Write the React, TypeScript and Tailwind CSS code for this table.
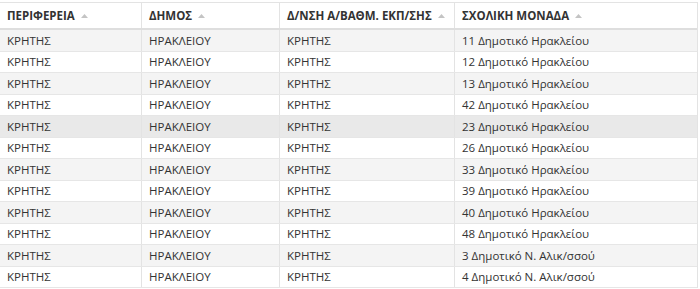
import React from "react";

const rows: string[] = [
  "11 Δημοτικό Ηρακλείου",
  "12 Δημοτικό Ηρακλείου",
  "13 Δημοτικό Ηρακλείου",
  "42 Δημοτικό Ηρακλείου",
  "23 Δημοτικό Ηρακλείου",
  "26 Δημοτικό Ηρακλείου",
  "33 Δημοτικό Ηρακλείου",
  "39 Δημοτικό Ηρακλείου",
  "40 Δημοτικό Ηρακλείου",
  "48 Δημοτικό Ηρακλείου",
  "3 Δημοτικό Ν. Αλικ/σσού",
  "4 Δημοτικό Ν. Αλικ/σσού",
];

const headers = ["ΠΕΡΙΦΕΡΕΙΑ", "ΔΗΜΟΣ", "Δ/ΝΣΗ Α/ΒΑΘΜ. ΕΚΠ/ΣΗΣ", "ΣΧΟΛΙΚΗ ΜΟΝΑΔΑ"];

function SortUp() {
  return (
    <svg width="7" height="4" viewBox="0 0 7 4" className="ml-[6px] mt-[1px]">
      <path d="M0 4 L3.5 0 L7 4 Z" fill="#c4c4c4" />
    </svg>
  );
}

export default function App() {
  return (
    <div
      className="w-[700px] h-[289px] bg-white pt-[2px] text-[#333] overflow-hidden"
      style={{ fontFamily: '"Open Sans", "Noto Sans", sans-serif' }}
    >
      <div className="w-[698px] border-t border-r border-[#e3e3e3]">
        <div className="grid grid-cols-[141px_138px_175px_243px] h-[27px] border-b-2 border-[#dedede]">
          {headers.map((h, i) => (
            <div
              key={h}
              className={`flex items-center pl-[7px] text-[11.5px] font-bold ${i > 0 ? "border-l border-[#e3e3e3]" : ""}`}
            >
              <span>{h}</span>
              <SortUp />
            </div>
          ))}
        </div>
        {rows.map((school, idx) => {
          const bg = idx === 4 ? "bg-[#e9e9e9]" : idx % 2 === 0 ? "bg-[#f4f4f4]" : "bg-white";
          return (
            <div
              key={school}
              className={`grid grid-cols-[141px_138px_175px_243px] h-[21.5px] border-b border-[#e6e6e6] text-[11.5px] ${bg}`}
            >
              <div className="flex items-center pl-[7px]">ΚΡΗΤΗΣ</div>
              <div className="flex items-center pl-[7px] border-l border-[#e3e3e3]">ΗΡΑΚΛΕΙΟΥ</div>
              <div className="flex items-center pl-[7px] border-l border-[#e3e3e3]">ΚΡΗΤΗΣ</div>
              <div className="flex items-center pl-[7px] border-l border-[#e3e3e3]">{school}</div>
            </div>
          );
        })}
      </div>
    </div>
  );
}
